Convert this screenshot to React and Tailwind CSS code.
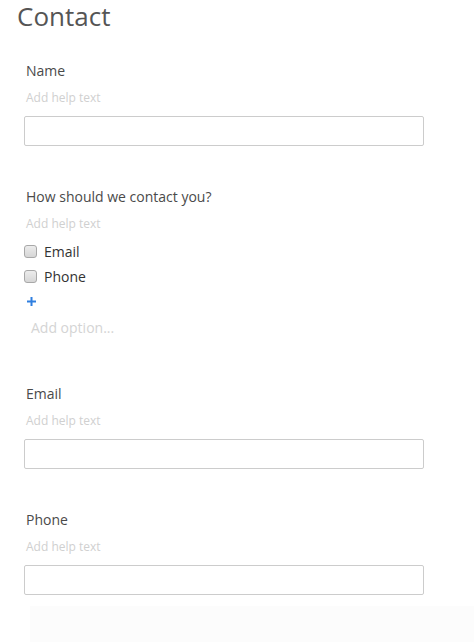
import React from 'react'

function HelpText() {
    return <p className="text-[12px] leading-[16px] text-[#d0d0d0] mt-[9px]">Add help text</p>
}

function TextField({ label }) {
    return (
        <div className="pl-[24px]">
            <p className="pl-[2px] text-[14px] leading-[20px] text-[#4a4a4a]">{label}</p>
            <div className="pl-[2px]"><HelpText /></div>
            <div className="mt-[10px] w-[400px] h-[30px] border border-[#ccc] rounded-[2px] bg-white"></div>
        </div>
    )
}

function CheckOption({ label }) {
    return (
        <div className="flex items-center h-[25px]">
            <span className="w-[13px] h-[13px] rounded-[3px] border border-[#a8a8a8] bg-gradient-to-b from-[#ececec] to-[#d6d6d6]"></span>
            <span className="ml-[7px] text-[14px] text-[#333]">{label}</span>
        </div>
    )
}

export default function App() {
    return (
        <div className="w-[474px] h-[642px] bg-white overflow-hidden relative" style={{ fontFamily: '"Open Sans", sans-serif' }}>
            <h1 className="pl-[17px] text-[26px] leading-[32px] text-[#555] font-normal">Contact</h1>
            <div className="mt-[29px]">
                <TextField label="Name" />
            </div>
            <div className="mt-[41px] pl-[24px]">
                <p className="pl-[2px] text-[14px] leading-[20px] text-[#4a4a4a]">How should we contact you?</p>
                <div className="pl-[2px]"><HelpText /></div>
                <div className="mt-[7px]">
                    <CheckOption label="Email" />
                    <CheckOption label="Phone" />
                </div>
                <div className="pl-[3px] h-[24px] flex items-center">
                    <svg width="9" height="9" viewBox="0 0 9 9"><path d="M4.5 0v9M0 4.5h9" stroke="#2f7fe0" strokeWidth="2" /></svg>
                </div>
                <p className="pl-[7px] mt-[5px] text-[14px] leading-[20px] text-[#d4d4d4]">Add option...</p>
            </div>
            <div className="mt-[46px]">
                <TextField label="Email" />
            </div>
            <div className="mt-[41px]">
                <TextField label="Phone" />
            </div>
            <div className="absolute left-[30px] right-0 top-[606px] bottom-0 bg-[#fcfcfc]"></div>
        </div>
    )
}
